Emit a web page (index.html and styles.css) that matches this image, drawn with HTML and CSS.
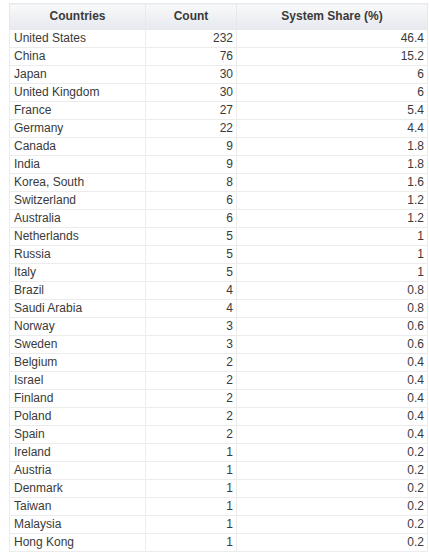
FILE: index.html
```html
<!DOCTYPE html>
<html>
<head>
<meta charset="utf-8">
<link rel="stylesheet" href="styles.css">
</head>
<body>
<table class="grid">
  <colgroup><col class="c1"><col class="c2"><col class="c3"></colgroup>
  <thead>
    <tr><th>Countries</th><th>Count</th><th>System Share (%)</th></tr>
  </thead>
  <tbody>
    <tr><td>United States</td><td class="num">232</td><td class="num">46.4</td></tr>
    <tr><td>China</td><td class="num">76</td><td class="num">15.2</td></tr>
    <tr><td>Japan</td><td class="num">30</td><td class="num">6</td></tr>
    <tr><td>United Kingdom</td><td class="num">30</td><td class="num">6</td></tr>
    <tr><td>France</td><td class="num">27</td><td class="num">5.4</td></tr>
    <tr><td>Germany</td><td class="num">22</td><td class="num">4.4</td></tr>
    <tr><td>Canada</td><td class="num">9</td><td class="num">1.8</td></tr>
    <tr><td>India</td><td class="num">9</td><td class="num">1.8</td></tr>
    <tr><td>Korea, South</td><td class="num">8</td><td class="num">1.6</td></tr>
    <tr><td>Switzerland</td><td class="num">6</td><td class="num">1.2</td></tr>
    <tr><td>Australia</td><td class="num">6</td><td class="num">1.2</td></tr>
    <tr><td>Netherlands</td><td class="num">5</td><td class="num">1</td></tr>
    <tr><td>Russia</td><td class="num">5</td><td class="num">1</td></tr>
    <tr><td>Italy</td><td class="num">5</td><td class="num">1</td></tr>
    <tr><td>Brazil</td><td class="num">4</td><td class="num">0.8</td></tr>
    <tr><td>Saudi Arabia</td><td class="num">4</td><td class="num">0.8</td></tr>
    <tr><td>Norway</td><td class="num">3</td><td class="num">0.6</td></tr>
    <tr><td>Sweden</td><td class="num">3</td><td class="num">0.6</td></tr>
    <tr><td>Belgium</td><td class="num">2</td><td class="num">0.4</td></tr>
    <tr><td>Israel</td><td class="num">2</td><td class="num">0.4</td></tr>
    <tr><td>Finland</td><td class="num">2</td><td class="num">0.4</td></tr>
    <tr><td>Poland</td><td class="num">2</td><td class="num">0.4</td></tr>
    <tr><td>Spain</td><td class="num">2</td><td class="num">0.4</td></tr>
    <tr><td>Ireland</td><td class="num">1</td><td class="num">0.2</td></tr>
    <tr><td>Austria</td><td class="num">1</td><td class="num">0.2</td></tr>
    <tr><td>Denmark</td><td class="num">1</td><td class="num">0.2</td></tr>
    <tr><td>Taiwan</td><td class="num">1</td><td class="num">0.2</td></tr>
    <tr><td>Malaysia</td><td class="num">1</td><td class="num">0.2</td></tr>
    <tr><td>Hong Kong</td><td class="num">1</td><td class="num">0.2</td></tr>
  </tbody>
</table>
</body>
</html>
```

FILE: styles.css
```css
html, body {
  margin: 0;
  padding: 0;
  background: #ffffff;
}

.grid {
  margin: 3px 0 0 9px;
  width: 418px;
  border-collapse: collapse;
  table-layout: fixed;
  font-family: "Liberation Sans", Arial, sans-serif;
  font-size: 12px;
  color: #3a3a3a;
}

.c1 { width: 136px; }
.c2 { width: 91px; }
.c3 { width: 191px; }

.grid th {
  height: 25px;
  padding: 0 3px;
  font-weight: bold;
  text-align: center;
  color: #3a3a3a;
  background: linear-gradient(to bottom, #f8f9fa 0%, #e6e9ee 100%);
  border: 1px solid #e6e8ec;
  line-height: 25px;
}

.grid td {
  height: 17px;
  padding: 0 3px 0 4px;
  line-height: 17px;
  border: 1px solid #ececec;
  white-space: nowrap;
}

.grid td.num {
  text-align: right;
  padding: 0 3px 0 3px;
}
```
